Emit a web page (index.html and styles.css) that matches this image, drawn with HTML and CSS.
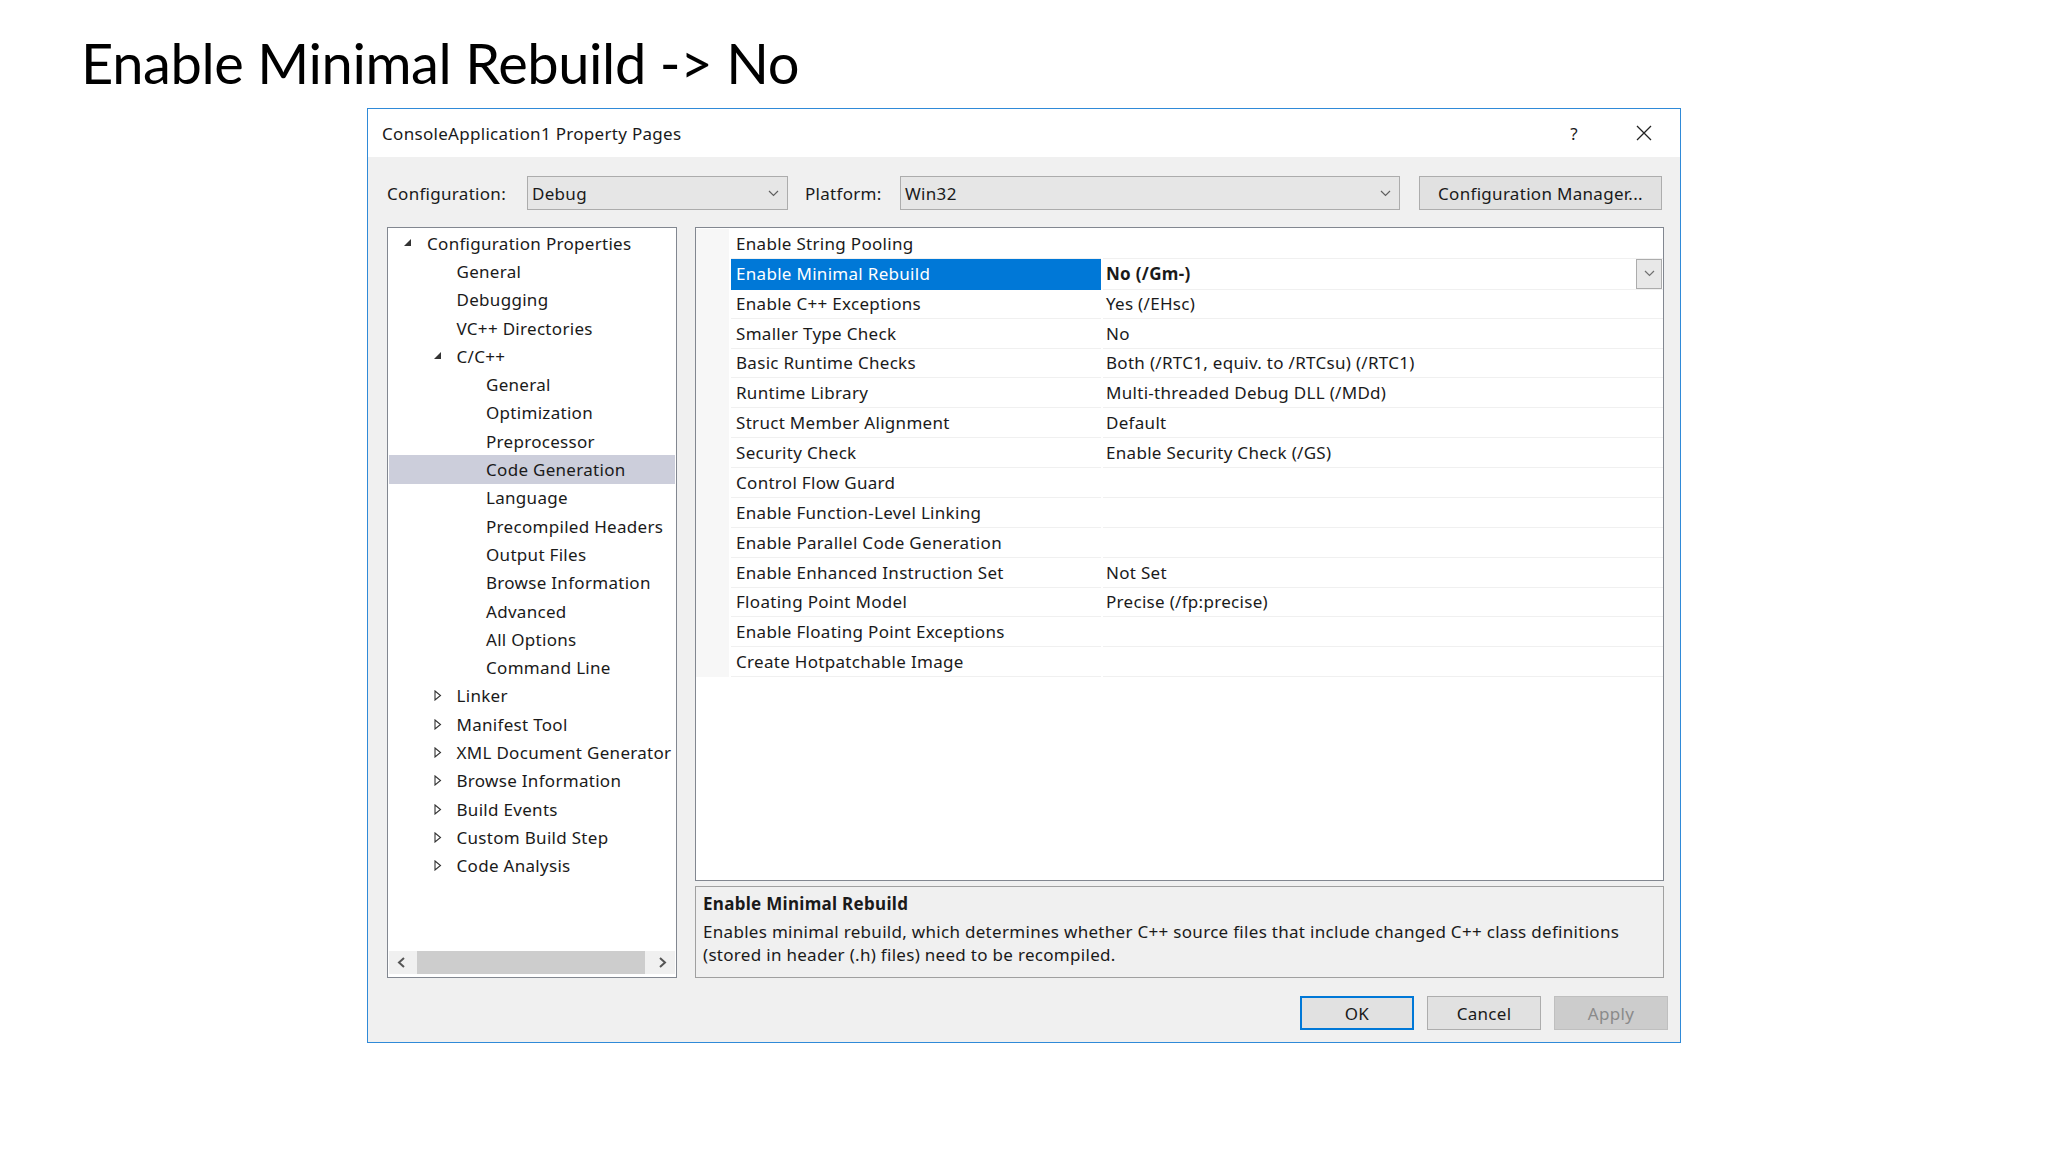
FILE: index.html
```html
<!DOCTYPE html>
<html lang="en">
<head>
  <meta charset="UTF-8" />
  <title>Enable Minimal Rebuild</title>
  <link rel="stylesheet" href="styles.css">
</head>
<body>
  <h1 class="slide-title">Enable Minimal Rebuild -&gt; No</h1>

  <div class="dialog">
    <div class="titlebar">
      <span class="title">ConsoleApplication1 Property Pages</span>
      <span class="help">?</span>
      <svg class="close" width="18" height="18" viewBox="0 0 18 18">
        <path d="M2 2 L16 16 M16 2 L2 16" stroke="#222" stroke-width="1.3" fill="none"/>
      </svg>
    </div>

    <div class="dialog-body">
      <div class="config-row">
        <span class="label label-config">Configuration:</span>
        <div class="combo combo-config">
          <span>Debug</span>
          <svg class="chev" width="11" height="7" viewBox="0 0 11 7"><path d="M1 1 L5.5 5.5 L10 1" stroke="#606060" stroke-width="1.2" fill="none"/></svg>
        </div>
        <span class="label label-platform">Platform:</span>
        <div class="combo combo-platform">
          <span>Win32</span>
          <svg class="chev" width="11" height="7" viewBox="0 0 11 7"><path d="M1 1 L5.5 5.5 L10 1" stroke="#606060" stroke-width="1.2" fill="none"/></svg>
        </div>
        <button class="btn btn-manager">Configuration Manager...</button>
      </div>

      <div class="main">
        <div class="tree">
          <ul class="tree-list">
            <li class="node lvl0"><span class="twisty"><svg width="8" height="8" viewBox="0 0 8 8"><path d="M7 0 L7 7 L0 7 Z" fill="#333"/></svg></span>Configuration Properties</li>
            <li class="node lvl1"><span class="twisty"></span>General</li>
            <li class="node lvl1"><span class="twisty"></span>Debugging</li>
            <li class="node lvl1"><span class="twisty"></span>VC++ Directories</li>
            <li class="node lvl1"><span class="twisty"><svg width="8" height="8" viewBox="0 0 8 8"><path d="M7 0 L7 7 L0 7 Z" fill="#333"/></svg></span>C/C++</li>
            <li class="node lvl2"><span class="twisty"></span>General</li>
            <li class="node lvl2"><span class="twisty"></span>Optimization</li>
            <li class="node lvl2"><span class="twisty"></span>Preprocessor</li>
            <li class="node lvl2 selected"><span class="twisty"></span>Code Generation</li>
            <li class="node lvl2"><span class="twisty"></span>Language</li>
            <li class="node lvl2"><span class="twisty"></span>Precompiled Headers</li>
            <li class="node lvl2"><span class="twisty"></span>Output Files</li>
            <li class="node lvl2"><span class="twisty"></span>Browse Information</li>
            <li class="node lvl2"><span class="twisty"></span>Advanced</li>
            <li class="node lvl2"><span class="twisty"></span>All Options</li>
            <li class="node lvl2"><span class="twisty"></span>Command Line</li>
            <li class="node lvl1"><span class="twisty"><svg class="closed" width="8" height="11" viewBox="0 0 8 11"><path d="M1 1 L6.5 5.5 L1 10 Z" stroke="#333" stroke-width="1.1" fill="none"/></svg></span>Linker</li>
            <li class="node lvl1"><span class="twisty"><svg class="closed" width="8" height="11" viewBox="0 0 8 11"><path d="M1 1 L6.5 5.5 L1 10 Z" stroke="#333" stroke-width="1.1" fill="none"/></svg></span>Manifest Tool</li>
            <li class="node lvl1"><span class="twisty"><svg class="closed" width="8" height="11" viewBox="0 0 8 11"><path d="M1 1 L6.5 5.5 L1 10 Z" stroke="#333" stroke-width="1.1" fill="none"/></svg></span>XML Document Generator</li>
            <li class="node lvl1"><span class="twisty"><svg class="closed" width="8" height="11" viewBox="0 0 8 11"><path d="M1 1 L6.5 5.5 L1 10 Z" stroke="#333" stroke-width="1.1" fill="none"/></svg></span>Browse Information</li>
            <li class="node lvl1"><span class="twisty"><svg class="closed" width="8" height="11" viewBox="0 0 8 11"><path d="M1 1 L6.5 5.5 L1 10 Z" stroke="#333" stroke-width="1.1" fill="none"/></svg></span>Build Events</li>
            <li class="node lvl1"><span class="twisty"><svg class="closed" width="8" height="11" viewBox="0 0 8 11"><path d="M1 1 L6.5 5.5 L1 10 Z" stroke="#333" stroke-width="1.1" fill="none"/></svg></span>Custom Build Step</li>
            <li class="node lvl1"><span class="twisty"><svg class="closed" width="8" height="11" viewBox="0 0 8 11"><path d="M1 1 L6.5 5.5 L1 10 Z" stroke="#333" stroke-width="1.1" fill="none"/></svg></span>Code Analysis</li>
          </ul>
          <div class="hscroll">
            <span class="arrow"><svg width="9" height="11" viewBox="0 0 9 11"><path d="M7 1 L2 5.5 L7 10" stroke="#555" stroke-width="2" fill="none"/></svg></span>
            <span class="thumb"></span>
            <span class="arrow"><svg width="9" height="11" viewBox="0 0 9 11"><path d="M2 1 L7 5.5 L2 10" stroke="#555" stroke-width="2" fill="none"/></svg></span>
          </div>
        </div>

        <div class="right-col">
          <div class="grid">
            <div class="prop"><span class="gutter"></span><span class="name">Enable String Pooling</span><span class="value"></span></div>
            <div class="prop active"><span class="gutter"></span><span class="name">Enable Minimal Rebuild</span><span class="value">No (/Gm-)<span class="drop"><svg width="11" height="7" viewBox="0 0 11 7"><path d="M1 1 L5.5 5.5 L10 1" stroke="#707070" stroke-width="1.2" fill="none"/></svg></span></span></div>
            <div class="prop"><span class="gutter"></span><span class="name">Enable C++ Exceptions</span><span class="value">Yes (/EHsc)</span></div>
            <div class="prop"><span class="gutter"></span><span class="name">Smaller Type Check</span><span class="value">No</span></div>
            <div class="prop"><span class="gutter"></span><span class="name">Basic Runtime Checks</span><span class="value">Both (/RTC1, equiv. to /RTCsu) (/RTC1)</span></div>
            <div class="prop"><span class="gutter"></span><span class="name">Runtime Library</span><span class="value">Multi-threaded Debug DLL (/MDd)</span></div>
            <div class="prop"><span class="gutter"></span><span class="name">Struct Member Alignment</span><span class="value">Default</span></div>
            <div class="prop"><span class="gutter"></span><span class="name">Security Check</span><span class="value">Enable Security Check (/GS)</span></div>
            <div class="prop"><span class="gutter"></span><span class="name">Control Flow Guard</span><span class="value"></span></div>
            <div class="prop"><span class="gutter"></span><span class="name">Enable Function-Level Linking</span><span class="value"></span></div>
            <div class="prop"><span class="gutter"></span><span class="name">Enable Parallel Code Generation</span><span class="value"></span></div>
            <div class="prop"><span class="gutter"></span><span class="name">Enable Enhanced Instruction Set</span><span class="value">Not Set</span></div>
            <div class="prop"><span class="gutter"></span><span class="name">Floating Point Model</span><span class="value">Precise (/fp:precise)</span></div>
            <div class="prop"><span class="gutter"></span><span class="name">Enable Floating Point Exceptions</span><span class="value"></span></div>
            <div class="prop"><span class="gutter"></span><span class="name">Create Hotpatchable Image</span><span class="value"></span></div>
          </div>
          <div class="desc">
            <div class="desc-title">Enable Minimal Rebuild</div>
            <div class="desc-text">Enables minimal rebuild, which determines whether C++ source files that include changed C++ class definitions<br>(stored in header (.h) files) need to be recompiled.</div>
          </div>
        </div>
      </div>

      <div class="actions">
        <button class="btn btn-ok">OK</button>
        <button class="btn">Cancel</button>
        <button class="btn btn-disabled">Apply</button>
      </div>
    </div>
  </div>
</body>
</html>
```

FILE: styles.css
```css
body {
  margin: 0;
  background: #fff;
  font-family: "Noto Sans", "Open Sans", sans-serif;
  font-size: 17px;
  letter-spacing: 0.3px;
  color: #1a1a1a;
}

.slide-title {
  margin: 0;
  height: 108px;
  box-sizing: border-box;
  padding: 35px 0 0 81px;
  font-family: Lato, "Open Sans", sans-serif;
  font-weight: 400;
  font-size: 56px;
  line-height: 56px;
  letter-spacing: -0.4px;
  color: #000;
}

.dialog {
  margin-left: 367px;
  width: 1314px;
  height: 935px;
  box-sizing: border-box;
  border: 1px solid #2f8ad8;
  display: flex;
  flex-direction: column;
}

.titlebar {
  height: 48px;
  background: #fff;
  display: flex;
  align-items: center;
  padding-left: 14px;
}

.title {
  flex: 1;
  color: #1a1a1a;
}

.help {
  width: 10px;
  text-align: center;
  margin-right: 56px;
  font-size: 17px;
}

.close {
  margin-right: 27px;
}

.dialog-body {
  flex: 1;
  background: #f0f0f0;
  padding: 19px 0 12px 0;
  display: flex;
  flex-direction: column;
}

.config-row {
  display: flex;
  align-items: center;
  height: 34px;
  padding-left: 19px;
}

.label-config {
  width: 140px;
}

.label-platform {
  width: 95px;
  padding-left: 17px;
}

.combo {
  height: 34px;
  box-sizing: border-box;
  background: #e6e6e6;
  border: 1px solid #acacac;
  display: flex;
  align-items: center;
  padding: 0 8px 0 4px;
}

.combo span {
  flex: 1;
}

.combo-config {
  width: 261px;
}

.combo-platform {
  width: 500px;
}

.btn {
  height: 34px;
  box-sizing: border-box;
  background: #e1e1e1;
  border: 1px solid #adadad;
  font-family: inherit;
  font-size: 17px;
  letter-spacing: 0.3px;
  color: #1a1a1a;
  padding: 0;
}

.btn-manager {
  width: 243px;
  margin-left: 19px;
}

.main {
  display: flex;
  gap: 18px;
  height: 751px;
  margin-top: 17px;
  padding-left: 19px;
}

.tree {
  width: 290px;
  box-sizing: border-box;
  border: 1px solid #828790;
  background: #fff;
  display: flex;
  flex-direction: column;
}

.tree-list {
  list-style: none;
  margin: 0;
  padding: 1px 0 0 0;
}

.node {
  height: 28.3px;
  display: flex;
  align-items: center;
  padding-left: 14px;
  white-space: nowrap;
  overflow: hidden;
}

.node.lvl1 {
  padding-left: 43.5px;
}

.node.lvl2 {
  padding-left: 73px;
}

.node.selected {
  background: #cccedb;
  margin: 0 1px;
  padding-left: 72px;
}

.twisty {
  width: 12px;
  margin-right: 13px;
  display: flex;
  align-items: center;
  justify-content: center;
  flex-shrink: 0;
}

.hscroll {
  margin: auto 1px 3px 1px;
  height: 23px;
  background: #f0f0f0;
  display: flex;
  align-items: stretch;
}

.hscroll .arrow {
  width: 26px;
  display: flex;
  align-items: center;
  justify-content: center;
}

.hscroll .thumb {
  width: 230px;
  margin: 0 4px 0 2px;
  background: #cdcdcd;
}

.right-col {
  width: 969px;
  display: flex;
  flex-direction: column;
  gap: 5px;
}

.grid {
  height: 654px;
  box-sizing: border-box;
  border: 1px solid #828790;
  background: #fff;
  padding-top: 1px;
}

.prop {
  display: grid;
  grid-template-columns: 33px 370px 1fr;
  column-gap: 2px;
  height: 29.88px;
}

.prop .gutter {
  background: #f7f7f7;
}

.prop .name,
.prop .value {
  display: flex;
  align-items: center;
  border-bottom: 1px solid #f0f0f0;
  white-space: nowrap;
}

.prop .name {
  padding-left: 5px;
}

.prop .value {
  padding-left: 3px;
}

.prop.active .name {
  background: #0078d7;
  color: #fff;
  border-bottom-color: #0078d7;
}

.prop.active .value {
  font-weight: 700;
  justify-content: space-between;
}

.drop {
  width: 26px;
  height: 30px;
  box-sizing: border-box;
  background: #e8e8e8;
  border: 1px solid #acacac;
  display: flex;
  align-items: center;
  justify-content: center;
  margin-right: 1px;
}

.desc {
  height: 92px;
  box-sizing: border-box;
  border: 1px solid #a0a0a0;
  background: #f0f0f0;
  padding: 5px 0 0 7px;
  line-height: 23px;
}

.desc-title {
  font-weight: 700;
  margin-bottom: 5px;
}

.actions {
  display: flex;
  justify-content: flex-end;
  gap: 13px;
  margin-top: 18px;
  padding-right: 12px;
}

.actions .btn {
  width: 114px;
}

.btn-ok {
  border: 2px solid #0078d7;
}

.btn-disabled {
  background: #cccccc;
  border-color: #bfbfbf;
  color: #8a8a8a;
}
```
